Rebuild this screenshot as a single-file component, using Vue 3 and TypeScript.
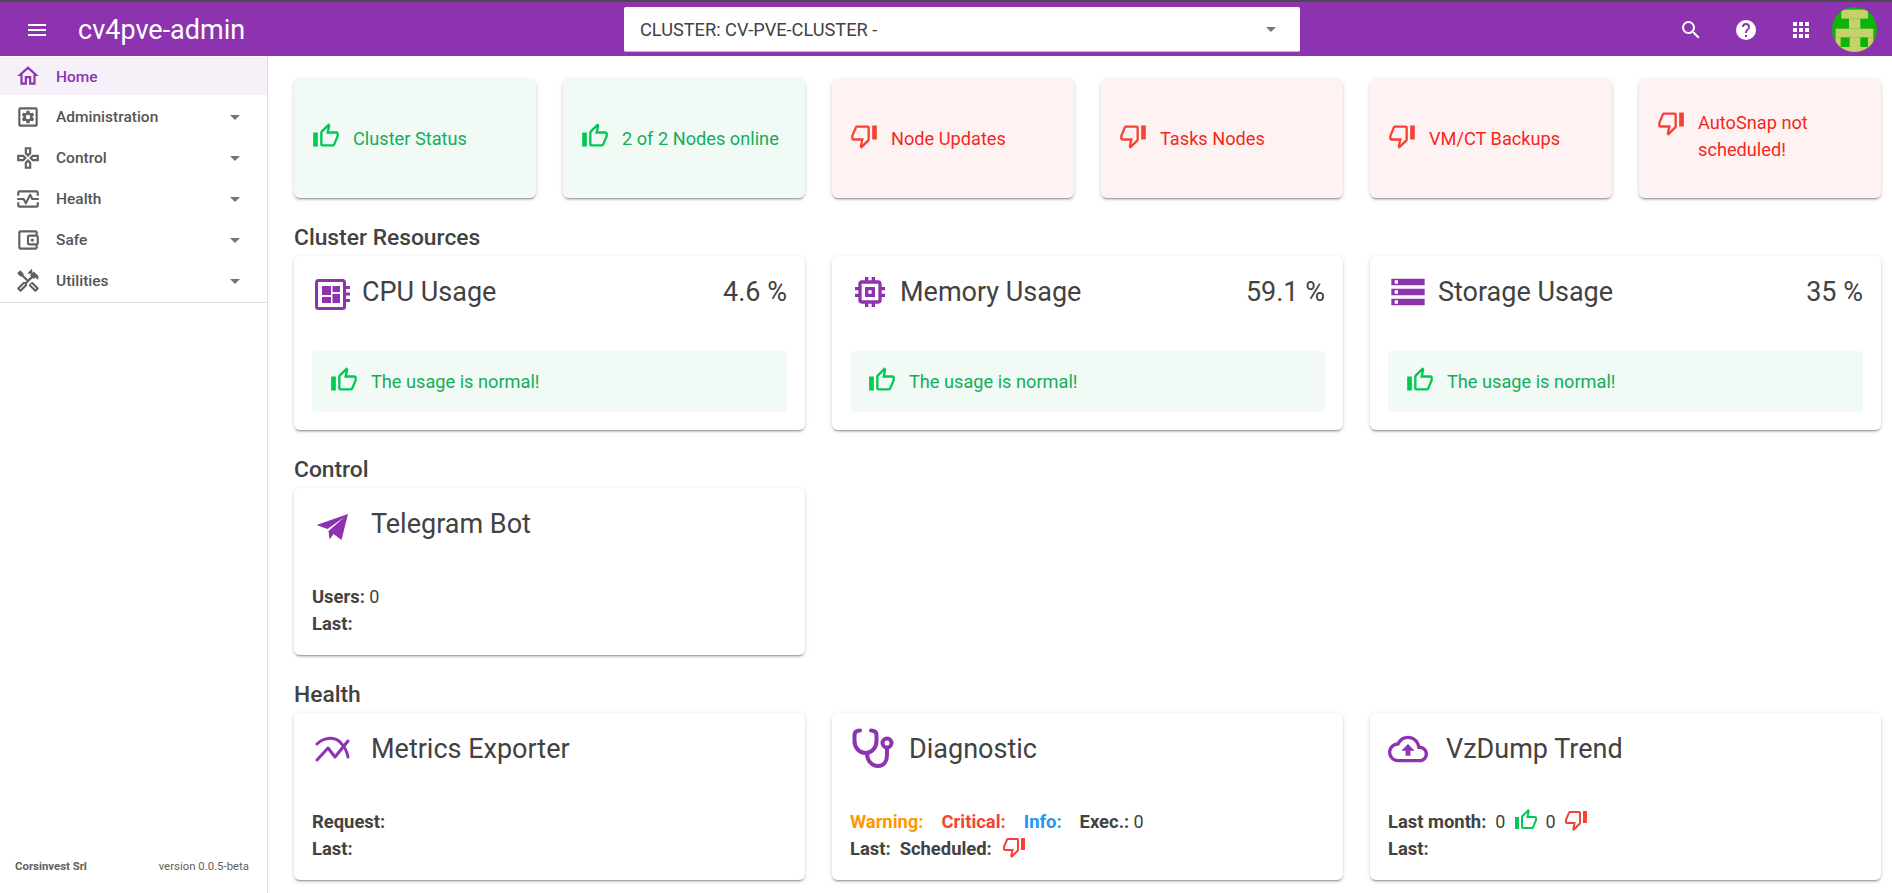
<template>
  <div class="page">
    <header class="topbar">
      <svg class="icon menu-btn" viewBox="0 0 24 24"><path :d="icons.menu" /></svg>
      <div class="brand">cv4pve-admin</div>
      <div class="select">
        <span>CLUSTER: CV-PVE-CLUSTER -</span>
        <svg class="icon" viewBox="0 0 24 24"><path :d="icons.drop" /></svg>
      </div>
      <div class="top-actions">
        <svg class="icon" viewBox="0 0 24 24"><path :d="icons.search" /></svg>
        <svg class="icon" viewBox="0 0 24 24"><path :d="icons.help" /></svg>
        <svg class="icon" viewBox="0 0 24 24"><path :d="icons.apps" /></svg>
        <svg class="avatar" viewBox="0 0 135 135">
          <rect width="135" height="135" fill="#0bb30b" />
          <g fill="#c5d16a">
            <rect x="28" y="8" width="80" height="27" />
            <rect x="51" y="35" width="34" height="30" />
            <rect x="11" y="65" width="113" height="26" />
            <rect x="11" y="91" width="15" height="29" />
            <rect x="53" y="91" width="32" height="29" />
            <rect x="108" y="91" width="16" height="29" />
            <rect x="11" y="120" width="113" height="15" />
          </g>
        </svg>
      </div>
    </header>

    <div class="body">
      <aside class="sidebar">
        <nav class="nav">
          <div v-for="item in navItems" :key="item.label" class="nav-item" :class="{ active: item.active }">
            <svg class="icon nav-icon" viewBox="0 0 24 24">
              <path :d="item.icon" />
              <path v-if="item.inner" :d="item.inner" transform="translate(5.04 5.04) scale(0.58)" />
              <circle v-if="item.label === 'Safe'" cx="16" cy="12" r="1.5" />
            </svg>
            <span class="nav-label">{{ item.label }}</span>
            <svg v-if="!item.active" class="icon caret" viewBox="0 0 24 24"><path :d="icons.drop" /></svg>
          </div>
        </nav>
        <footer class="side-foot">
          <b>Corsinvest Srl</b>
          <span>version 0.0.5-beta</span>
        </footer>
      </aside>

      <main class="content">
        <section class="status-row">
          <div v-for="s in statuses" :key="s.text" class="status" :class="s.ok ? 'ok' : 'bad'">
            <div class="status-in" :class="{ multi: s.multi }">
              <svg class="icon thumb" viewBox="0 0 24 24"><path :d="s.ok ? icons.up : icons.down" /></svg>
              <span>{{ s.text }}</span>
            </div>
          </div>
        </section>

        <h2>Cluster Resources</h2>
        <section class="three">
          <div v-for="r in resources" :key="r.title" class="card res">
            <div class="card-head">
              <svg v-if="r.cpu" class="big" viewBox="0 0 40 40">
                <rect x="4.5" y="8.5" width="28" height="28" rx="2" fill="none" stroke="#8e33b0" stroke-width="3" />
                <path d="M10 14h9v9h-9zM20.500 14H28v6h-7.500zM10 25h9v6h-9zM20.500 22H28v9h-7.500zM34 14h4v3h-4zM34 20.500h4v3h-4zM34 27h4v3h-4z" />
              </svg>
              <svg v-else class="big" viewBox="0 0 24 24"><path :d="r.icon" /></svg>
              <span class="title">{{ r.title }}</span>
              <span class="pct">{{ r.value }}</span>
            </div>
            <div class="usage">
              <svg class="icon thumb" viewBox="0 0 24 24"><path :d="icons.up" /></svg>
              <span>The usage is normal!</span>
            </div>
          </div>
        </section>

        <h2>Control</h2>
        <section class="three">
          <div class="card info">
            <div class="card-head wide">
              <svg class="big" viewBox="0 0 40 40"><path d="M36 10L4.500 21l11 4 17-12-16 14 1 8.500 4-5.500 8 6z" /></svg>
              <span class="title">Telegram Bot</span>
            </div>
            <div class="lines">
              <div><b>Users:</b> 0</div>
              <div><b>Last:</b></div>
            </div>
          </div>
        </section>

        <h2>Health</h2>
        <section class="three">
          <div class="card info">
            <div class="card-head wide">
              <svg class="big" viewBox="0 0 40 40" fill="none">
                <path class="line" d="M5 15C11 9 21 7 28 13C32 17 35 22 36 28" />
                <path class="line" d="M5 31L16 19L23 28L36 12" />
              </svg>
              <span class="title">Metrics Exporter</span>
            </div>
            <div class="lines">
              <div><b>Request:</b></div>
              <div><b>Last:</b></div>
            </div>
          </div>

          <div class="card info">
            <div class="card-head diag">
              <svg class="huge" viewBox="1 0 48 48" fill="none">
                <path class="line thick" d="M11 5.500C7 5.500 5.500 7 5.500 10V16C5.500 23 10.500 28 16.500 28C22.500 28 27.500 23 27.500 16V10C27.500 7 26 5.500 22 5.500" />
                <path class="line thick" d="M18 28C18 36 23 41 29 41C35 41 38 36 38 30V23" />
                <circle class="line thick" cx="38" cy="18" r="4.500" />
              </svg>
              <span class="title">Diagnostic</span>
            </div>
            <div class="lines">
              <div class="spread">
                <b class="warn">Warning:</b>
                <b class="crit">Critical:</b>
                <b class="inf">Info:</b>
                <span><b>Exec.:</b> 0</span>
              </div>
              <div class="row">
                <b>Last:</b>
                <b>Scheduled:</b>
                <svg class="icon thumb-sm red" viewBox="0 0 24 24"><path :d="icons.down" /></svg>
              </div>
            </div>
          </div>

          <div class="card info">
            <div class="card-head cloud">
              <svg class="big" viewBox="0 0 24 24"><path :d="icons.cloud" /></svg>
              <span class="title">VzDump Trend</span>
            </div>
            <div class="lines">
              <div class="row month">
                <b>Last month:</b>
                <span>0</span>
                <svg class="icon thumb-sm green" viewBox="0 0 24 24"><path :d="icons.up" /></svg>
                <span>0</span>
                <svg class="icon thumb-sm red" viewBox="0 0 24 24"><path :d="icons.down" /></svg>
              </div>
              <div><b>Last:</b></div>
            </div>
          </div>
        </section>
      </main>
    </div>
  </div>
</template>

<script setup lang="ts">
const icons = {
  menu: 'M3,6H21V8H3V6M3,11H21V13H3V11M3,16H21V18H3V16Z',
  drop: 'M7,10L12,15L17,10H7Z',
  search:
    'M9.5,3A6.5,6.5 0 0,1 16,9.5C16,11.11 15.41,12.59 14.44,13.73L14.71,14H15.5L20.5,19L19,20.5L14,15.5V14.71L13.73,14.44C12.59,15.41 11.11,16 9.5,16A6.5,6.5 0 0,1 3,9.5A6.5,6.5 0 0,1 9.5,3M9.5,5C7,5 5,7 5,9.5C5,12 7,14 9.5,14C12,14 14,12 14,9.5C14,7 12,5 9.5,5Z',
  help: 'M15.07,11.25L14.17,12.17C13.45,12.89 13,13.5 13,15H11V14.5C11,13.39 11.45,12.39 12.17,11.67L13.41,10.41C13.78,10.05 14,9.55 14,9C14,7.89 13.1,7 12,7A2,2 0 0,0 10,9H8A4,4 0 0,1 12,5A4,4 0 0,1 16,9C16,9.88 15.64,10.67 15.07,11.25M13,19H11V17H13M12,2A10,10 0 0,0 2,12A10,10 0 0,0 12,22A10,10 0 0,0 22,12C22,6.47 17.5,2 12,2Z',
  apps: 'M16,20H20V16H16M16,14H20V10H16M10,8H14V4H10M16,8H20V4H16M10,14H14V10H10M4,14H8V10H4M4,20H8V16H4M10,20H14V16H10M4,8H8V4H4V8Z',
  up: 'M5,9V21H1V9H5M9,21A2,2 0 0,1 7,19V9C7,8.45 7.22,7.95 7.59,7.59L14.17,1L15.23,2.06C15.5,2.33 15.67,2.7 15.67,3.11L15.64,3.43L14.69,8H21C22.11,8 23,8.9 23,10V12C23,12.26 22.95,12.5 22.86,12.73L19.84,19.78C19.54,20.5 18.83,21 18,21H9M9,19H18.03L21,12V10H12.21L13.34,4.68L9,9.03V19Z',
  down: 'M19,15V3H23V15H19M15,3A2,2 0 0,1 17,5V15C17,15.55 16.78,16.05 16.41,16.41L9.83,23L8.77,21.94C8.5,21.67 8.33,21.3 8.33,20.88L8.36,20.57L9.31,16H3C1.89,16 1,15.1 1,14V12C1,11.74 1.05,11.5 1.14,11.27L4.16,4.22C4.46,3.5 5.17,3 6,3H15M15,5H5.97L3,12V14H11.78L10.65,19.32L15,14.97V5Z',
  cloud:
    'M19.35 10.04C18.67 6.59 15.64 4 12 4 9.11 4 6.6 5.64 5.35 8.04 2.34 8.36 0 10.91 0 14c0 3.31 2.69 6 6 6h13c2.76 0 5-2.24 5-5 0-2.64-2.05-4.78-4.65-4.96zM19 18H6c-2.21 0-4-1.79-4-4 0-2.05 1.53-3.76 3.56-3.97l1.07-.11.5-.95C8.08 7.14 9.94 6 12 6c2.62 0 4.88 1.86 5.39 4.43l.3 1.5 1.53.11c1.56.1 2.78 1.41 2.78 2.96 0 1.65-1.35 3-3 3zM8 13h2.55v3h2.9v-3H16l-4-4z',
}

const cog =
  'M12,15.5A3.5,3.5 0 0,1 8.5,12A3.5,3.5 0 0,1 12,8.5A3.5,3.5 0 0,1 15.5,12A3.5,3.5 0 0,1 12,15.5M19.43,12.97C19.47,12.65 19.5,12.33 19.5,12C19.5,11.67 19.47,11.34 19.43,11L21.54,9.37C21.73,9.22 21.78,8.95 21.66,8.73L19.66,5.27C19.54,5.05 19.27,4.96 19.05,5.05L16.56,6.05C16.04,5.66 15.5,5.32 14.87,5.07L14.5,2.42C14.46,2.18 14.25,2 14,2H10C9.75,2 9.54,2.18 9.5,2.42L9.13,5.07C8.5,5.32 7.96,5.66 7.44,6.05L4.95,5.05C4.73,4.96 4.46,5.05 4.34,5.27L2.34,8.73C2.21,8.95 2.27,9.22 2.46,9.37L4.57,11C4.53,11.34 4.5,11.67 4.5,12C4.5,12.33 4.53,12.65 4.57,12.97L2.46,14.63C2.27,14.78 2.21,15.05 2.34,15.27L4.34,18.73C4.46,18.95 4.73,19.03 4.95,18.95L7.44,17.94C7.96,18.34 8.5,18.68 9.13,18.93L9.5,21.58C9.54,21.82 9.75,22 10,22H14C14.25,22 14.46,21.82 14.5,21.58L14.87,18.93C15.5,18.67 16.04,18.34 16.56,17.94L19.05,18.95C19.27,19.03 19.54,18.95 19.66,18.73L21.66,15.27C21.78,15.05 21.73,14.78 21.54,14.63L19.43,12.97Z'

interface NavItem {
  label: string
  icon: string
  inner?: string
  active?: boolean
}

const navItems: NavItem[] = [
  {
    label: 'Home',
    active: true,
    icon: 'M12 5.69L17 10.19V18H15V12H9V18H7V10.19L12 5.69M12 3L2 12H5V20H11V14H13V20H19V12H22L12 3Z',
  },
  {
    label: 'Administration',
    icon: 'M5 3H19A2 2 0 0 1 21 5V19A2 2 0 0 1 19 21H5A2 2 0 0 1 3 19V5A2 2 0 0 1 5 3M5 5V19H19V5H5Z',
    inner: cog,
  },
  {
    label: 'Control',
    icon: 'M13,4V7.17L12,8.17L11,7.17V4H13M20,11V13H16.83L15.83,12L16.83,11H20M7.17,11L8.17,12L7.17,13H4V11H7.17M12,15.83L13,16.83V20H11V16.83L12,15.83M15,2H9V8L12,11L15,8V2M22,9H16L13,12L16,15H22V9M8,9H2V15H8L11,12L8,9M12,13L9,16V22H15V16L12,13Z',
  },
  {
    label: 'Health',
    icon: 'M20 4H4c-1.1 0-2 .9-2 2v3h2V6h16v3h2V6c0-1.1-.9-2-2-2zM20 18H4v-3H2v3c0 1.1.9 2 2 2h16c1.1 0 2-.9 2-2v-3h-2v3zM14.89 7.55c-.34-.68-1.45-.68-1.79 0L10 13.76l-1.11-2.21C8.72 11.21 8.38 11 8 11H2v2h5.38l1.72 3.45c.18.34.52.55.9.55s.72-.21.89-.55L14 10.24l1.11 2.21c.17.34.51.55.89.55h6v-2h-5.38l-1.72-3.45z',
  },
  {
    label: 'Safe',
    icon: 'M21 7.28V5c0-1.1-.9-2-2-2H5c-1.11 0-2 .9-2 2v14c0 1.1.89 2 2 2h14c1.1 0 2-.9 2-2v-2.28c.59-.35 1-.98 1-1.72V9c0-.74-.41-1.37-1-1.72zM20 9v6h-7V9h7zM5 19V5h14v2h-6c-1.1 0-2 .9-2 2v6c0 1.1.9 2 2 2h6v2H5z',
  },
  {
    label: 'Utilities',
    icon: 'M21.67 18.17l-5.3-5.3h-.99l-2.54 2.54v.99l5.3 5.3c.39.39 1.02.39 1.41 0l2.12-2.12c.39-.38.39-1.02 0-1.41zm-2.83 1.42l-4.24-4.24.71-.71 4.24 4.24-.71.71zM17.34 10.19l1.41-1.41 2.12 2.12c1.17-1.17 1.17-3.07 0-4.24l-3.54-3.54-1.41 1.41V1.71l-.7-.71-3.54 3.54.71.71h2.83l-1.41 1.41 1.06 1.06-2.89 2.89-4.13-4.13V5.06L4.83 2.04 2 4.87 5.03 7.9h1.41l4.13 4.13-.85.85H7.6l-5.3 5.3c-.39.39-.39 1.02 0 1.41l2.12 2.12c.39.39 1.02.39 1.41 0l5.3-5.3v-2.12l5.15-5.15 1.06 1.05zm-7.98 5.15l-4.24 4.24-.71-.71 4.24-4.24.71.71z',
  },
]

const statuses = [
  { text: 'Cluster Status', ok: true },
  { text: '2 of 2 Nodes online', ok: true },
  { text: 'Node Updates', ok: false },
  { text: 'Tasks Nodes', ok: false },
  { text: 'VM/CT Backups', ok: false },
  { text: 'AutoSnap not scheduled!', ok: false, multi: true },
]

const resources = [
  { title: 'CPU Usage', value: '4.6 %', cpu: true, icon: '' },
  {
    title: 'Memory Usage',
    value: '59.1 %',
    cpu: false,
    icon: 'M17,17H7V7H17M21,11V9H19V7C19,5.89 18.1,5 17,5H15V3H13V5H11V3H9V5H7C5.89,5 5,5.89 5,7V9H3V11H5V13H3V15H5V17A2,2 0 0,0 7,19H9V21H11V19H13V21H15V19H17A2,2 0 0,0 19,17V15H21V13H19V11M13,13H11V11H13M15,9H9V15H15V9Z',
  },
  {
    title: 'Storage Usage',
    value: '35 %',
    cpu: false,
    icon: 'M2 20h20v-4H2v4zm2-3h2v2H4v-2zM2 4v4h20V4H2zm4 3H4V5h2v2zm-4 7h20v-4H2v4zm2-3h2v2H4v-2z',
  },
]
</script>

<style>
html,
body {
  margin: 0;
  height: 100%;
  overflow: hidden;
  background: #fff;
}
</style>

<style scoped>
.page {
  height: 893px;
  display: flex;
  flex-direction: column;
  font-family: Roboto, 'Liberation Sans', sans-serif;
  color: #424242;
}

.icon {
  width: 24px;
  height: 24px;
  fill: currentColor;
  flex: none;
}

.topbar {
  height: 56px;
  box-sizing: border-box;
  border-top: 2px solid #4a4a4a;
  padding-top: 1px;
  background: #8e33b0;
  color: #fff;
  display: flex;
  align-items: center;
  flex: none;
}

.menu-btn {
  margin-left: 25px;
}

.brand {
  margin-left: 29px;
  width: 546px;
  font-size: 27px;
}

.select {
  width: 676px;
  height: 45px;
  box-sizing: border-box;
  background: #fff;
  border-radius: 2px;
  border-bottom: 1px solid #bdbdbd;
  color: #424242;
  font-size: 18.2px;
  padding: 0 17px 0 16px;
  display: flex;
  align-items: center;
  justify-content: space-between;
}

.select .icon {
  color: #757575;
}

.top-actions {
  margin-left: auto;
  margin-right: 15px;
  display: flex;
  align-items: center;
  gap: 31px;
}

.avatar {
  width: 45px;
  height: 45px;
  margin-left: -12px;
  display: block;
  border-radius: 50%;
}

.body {
  flex: 1;
  min-height: 0;
  display: flex;
}

.sidebar {
  width: 268px;
  flex: none;
  box-sizing: border-box;
  border-right: 1px solid #e0e0e0;
  display: flex;
  flex-direction: column;
  padding-top: 1px;
}

.nav {
  border-bottom: 1px solid #e0e0e0;
  padding-bottom: 1px;
}

.nav-item {
  height: 41px;
  display: flex;
  align-items: center;
  padding: 0 20px 0 15px;
  color: #616161;
}

.nav-item.active {
  height: 38px;
  margin-bottom: 1px;
  background: #f6f1f9;
  color: #8e33b0;
}

.nav-icon {
  width: 26px;
  height: 26px;
}

.nav-label {
  margin-left: 15px;
  padding-top: 1px;
  font-size: 15.5px;
  font-weight: 500;
  color: #555;
}

.active .nav-label {
  color: #8e33b0;
}

.caret {
  margin-left: auto;
  color: #757575;
}

.side-foot {
  margin-top: auto;
  height: 54px;
  padding: 0 18px 0 15px;
  display: flex;
  align-items: center;
  justify-content: space-between;
  font-size: 11.4px;
  color: #616161;
}

.side-foot b {
  font-weight: 700;
}

.content {
  flex: 1;
  min-width: 0;
  padding: 23px 10px 0 26px;
}

h2 {
  margin: 0;
  padding: 24px 0 2px;
  font-size: 22.8px;
  line-height: 32px;
  font-weight: 500;
}

.status-row {
  display: grid;
  grid-template-columns: repeat(6, 242px);
  gap: 27px;
}

.status {
  height: 119px;
  box-sizing: border-box;
  border-radius: 6px;
  padding: 0 18px;
  display: flex;
  align-items: center;
  font-size: 18.2px;
  line-height: 27px;
  box-shadow: 0 3px 1px -2px rgba(0, 0, 0, 0.2), 0 2px 2px 0 rgba(0, 0, 0, 0.14), 0 1px 5px 0 rgba(0, 0, 0, 0.12);
}

.status-in {
  display: flex;
  align-items: flex-start;
  margin-top: -1px;
}

.status-in.multi {
  margin-top: -5px;
}

.thumb {
  width: 28px;
  height: 28px;
  margin-right: 13px;
  margin-top: -3px;
}

.multi .thumb {
  margin-top: 0;
}

.ok {
  background: #f1faf5;
  color: #14ad5a;
}

.ok .thumb {
  color: #00c853;
}

.bad {
  background: #fef3f2;
  color: #f5271d;
}

.bad .thumb {
  color: #f44336;
}

.three {
  display: grid;
  grid-template-columns: repeat(3, 511px);
  gap: 27px;
}

.card {
  background: #fff;
  border-radius: 6px;
  padding: 16px 18px 18px;
  box-sizing: border-box;
  box-shadow: 0 3px 1px -2px rgba(0, 0, 0, 0.2), 0 2px 2px 0 rgba(0, 0, 0, 0.14), 0 1px 5px 0 rgba(0, 0, 0, 0.12);
}

.card-head {
  height: 40px;
  display: flex;
  align-items: center;
}

.big {
  width: 40px;
  height: 40px;
  fill: #8e33b0;
  flex: none;
  margin-right: 10px;
}

.huge {
  width: 48px;
  height: 48px;
  flex: none;
  margin-right: 11px;
}

.line {
  stroke: #8e33b0;
  stroke-width: 3;
  stroke-linecap: round;
  stroke-linejoin: round;
  fill: none;
}

.thick {
  stroke-width: 4;
}

.wide .big {
  margin-right: 19px;
}

.cloud .big {
  margin-right: 18px;
}

.title {
  font-size: 27px;
  line-height: 32px;
}

.pct {
  margin-left: auto;
  font-size: 27px;
}

.usage {
  margin-top: 39px;
  height: 61px;
  box-sizing: border-box;
  padding: 0 18px;
  border-radius: 4px;
  background: #f1faf5;
  color: #14ad5a;
  display: flex;
  align-items: center;
  font-size: 18.2px;
  line-height: 27px;
}

.usage .thumb {
  color: #00c853;
}

.lines {
  margin-top: 39px;
  font-size: 18px;
  line-height: 27px;
}

.lines b {
  font-weight: 700;
  font-size: 18.4px;
}

.spread,
.row {
  display: flex;
  align-items: center;
  height: 27px;
}

.spread {
  gap: 18px;
}

.row {
  gap: 9px;
}

.month {
  gap: 0;
}

.month span {
  margin-left: 9px;
}

.month svg {
  margin-left: 9px;
}

.month svg + span {
  margin-left: 7px;
}

.month span + svg:last-child {
  margin-left: 8px;
}

.thumb-sm {
  margin-left: 1px;
  margin-top: -3px;
}

.green {
  color: #00c853;
}

.red {
  color: #f44336;
}

.warn {
  color: #ff9800;
}

.crit {
  color: #f44336;
}

.inf {
  color: #2196f3;
}
</style>
